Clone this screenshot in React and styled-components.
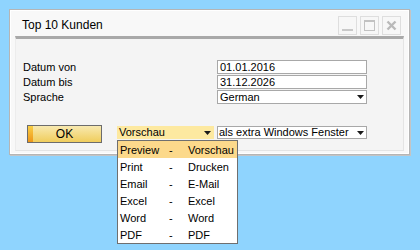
import styled, { createGlobalStyle } from 'styled-components'

const GlobalStyle = createGlobalStyle`
   html, body {
      margin: 0;
      padding: 0;
      background: #8fd4fe;
   }
   body {
      font-family: "Liberation Sans", Arial, sans-serif;
      font-size: 11px;
      color: #000;
   }
`

const outputs = [
   ['Preview', 'Vorschau'],
   ['Print', 'Drucken'],
   ['Email', 'E-Mail'],
   ['Excel', 'Excel'],
   ['Word', 'Word'],
   ['PDF', 'PDF'],
]

const Arrow = () => (
   <svg width="7" height="4" viewBox="0 0 7 4">
      <path d="M0 0 H7 L3.5 4 Z" fill="#1a1a1a" />
   </svg>
)

const App = () => {
   return (
      <Screen>
         <GlobalStyle />
         <Window>
            <TitleBar>
               <Title>Top 10 Kunden</Title>
               <Controls>
                  <ControlButton>
                     <svg width="17" height="17" viewBox="0 0 17 17">
                        <rect x="3" y="12" width="11" height="2" fill="#c9c9c9" />
                     </svg>
                  </ControlButton>
                  <ControlButton>
                     <svg width="17" height="17" viewBox="0 0 17 17">
                        <rect x="3.5" y="3.5" width="10" height="10" fill="none" stroke="#c2c2c2" />
                        <rect x="3" y="3" width="11" height="2" fill="#c2c2c2" />
                     </svg>
                  </ControlButton>
                  <ControlButton>
                     <svg width="17" height="17" viewBox="0 0 17 17">
                        <path d="M4.5 4.5 L12.5 12.5 M12.5 4.5 L4.5 12.5" stroke="#b9b9b9" strokeWidth="2.4" />
                     </svg>
                  </ControlButton>
               </Controls>
            </TitleBar>
            <Panel>
               <Form>
                  <Label>Datum von</Label>
                  <Field>01.01.2016</Field>
                  <Label>Datum bis</Label>
                  <Field>31.12.2026</Field>
                  <Label>Sprache</Label>
                  <Field>
                     German
                     <Arrow />
                  </Field>
               </Form>
               <Actions>
                  <OkButton>
                     <Stripe />
                     <OkLabel>OK</OkLabel>
                  </OkButton>
                  <SelectWrap>
                     <Select $open $width={97}>
                        Vorschau
                        <Arrow />
                     </Select>
                     <List>
                        {outputs.map(([en, de], i) => (
                           <Option key={en} $active={i === 0}>
                              <span>{en}</span>
                              <span>-</span>
                              <span>{de}</span>
                           </Option>
                        ))}
                     </List>
                  </SelectWrap>
                  <Select $width={150}>
                     als extra Windows Fenster
                     <Arrow />
                  </Select>
               </Actions>
            </Panel>
         </Window>
      </Screen>
   )
}

const Screen = styled.div`
   width: 420px;
   height: 250px;
   padding: 9px;
   box-sizing: border-box;
`

const Window = styled.div`
   width: 401px;
   height: 146px;
   box-sizing: border-box;
   border: 1px solid #b5b5b5;
   box-shadow: inset 0 0 0 1px #ffffff, 1px 1px 0 #c4c4c4;
   background: #f8f8f8;
   display: flex;
   flex-direction: column;
`

const TitleBar = styled.div`
   height: 26px;
   display: flex;
   align-items: center;
   justify-content: space-between;
   padding: 0 8px 0 12px;
`

const Title = styled.div`
   font-size: 12px;
   margin-top: 4px;
`

const Controls = styled.div`
   display: flex;
   gap: 3px;
   margin-top: 5px;
`

const ControlButton = styled.div`
   width: 19px;
   height: 19px;
   box-sizing: border-box;
   border: 1px solid #dedede;
   background: #f7f7f7;
   svg {
      display: block;
   }
`

const Panel = styled.div`
   margin: 0 5px;
   height: 115px;
   box-sizing: border-box;
   border-top: 3px solid #a9a9a9;
   border-left: 1px solid #ececec;
   border-right: 1px solid #e4e4e4;
   border-bottom: 1px solid #e4e4e4;
   background: #f4f4f4;
   padding: 21px 0 0 7px;
`

const Form = styled.div`
   display: grid;
   grid-template-columns: 194px 150px;
   grid-auto-rows: 14px;
   row-gap: 1px;
   align-items: center;
`

const Label = styled.div`
   line-height: 14px;
`

const Field = styled.div`
   height: 14px;
   box-sizing: border-box;
   border: 1px solid #a8a8a8;
   background: #fff;
   padding: 0 2px 0 2px;
   display: flex;
   align-items: center;
   justify-content: space-between;
   line-height: 12px;
`

const Actions = styled.div`
   display: flex;
   align-items: flex-start;
   margin-top: 21px;
   padding-left: 4px;
`

const OkButton = styled.div`
   width: 75px;
   height: 18px;
   box-sizing: border-box;
   border: 1px solid #6c6c6c;
   background: linear-gradient(#f8e9b0, #f0cd5c);
   display: flex;
   margin-right: 15px;
`

const Stripe = styled.div`
   width: 5px;
   background: linear-gradient(#f9cf45, #ee961a);
`

const OkLabel = styled.div`
   flex: 1;
   text-align: center;
   font-size: 12px;
   line-height: 16px;
   padding-right: 5px;
`

const SelectWrap = styled.div`
   position: relative;
   margin-right: 3px;
`

const Select = styled.div`
   width: ${(p) => p.$width}px;
   height: 13px;
   margin-top: 1px;
   box-sizing: border-box;
   border: 1px solid ${(p) => (p.$open ? '#fde9a0' : '#a8a8a8')};
   background: ${(p) => (p.$open ? '#fde9a0' : '#fff')};
   display: flex;
   align-items: center;
   justify-content: space-between;
   padding: 0 2px 0 1px;
   line-height: 11px;
`

const List = styled.div`
   position: absolute;
   top: 15px;
   left: 0;
   width: 121px;
   box-sizing: border-box;
   border: 1px solid #6f6f6f;
   background: #fff;
   z-index: 2;
`

const Option = styled.div`
   height: 17px;
   display: grid;
   grid-template-columns: 49px 19px auto;
   align-items: center;
   padding-left: 2px;
   background: ${(p) => (p.$active ? '#fcd98b' : '#fff')};
`

export default App
